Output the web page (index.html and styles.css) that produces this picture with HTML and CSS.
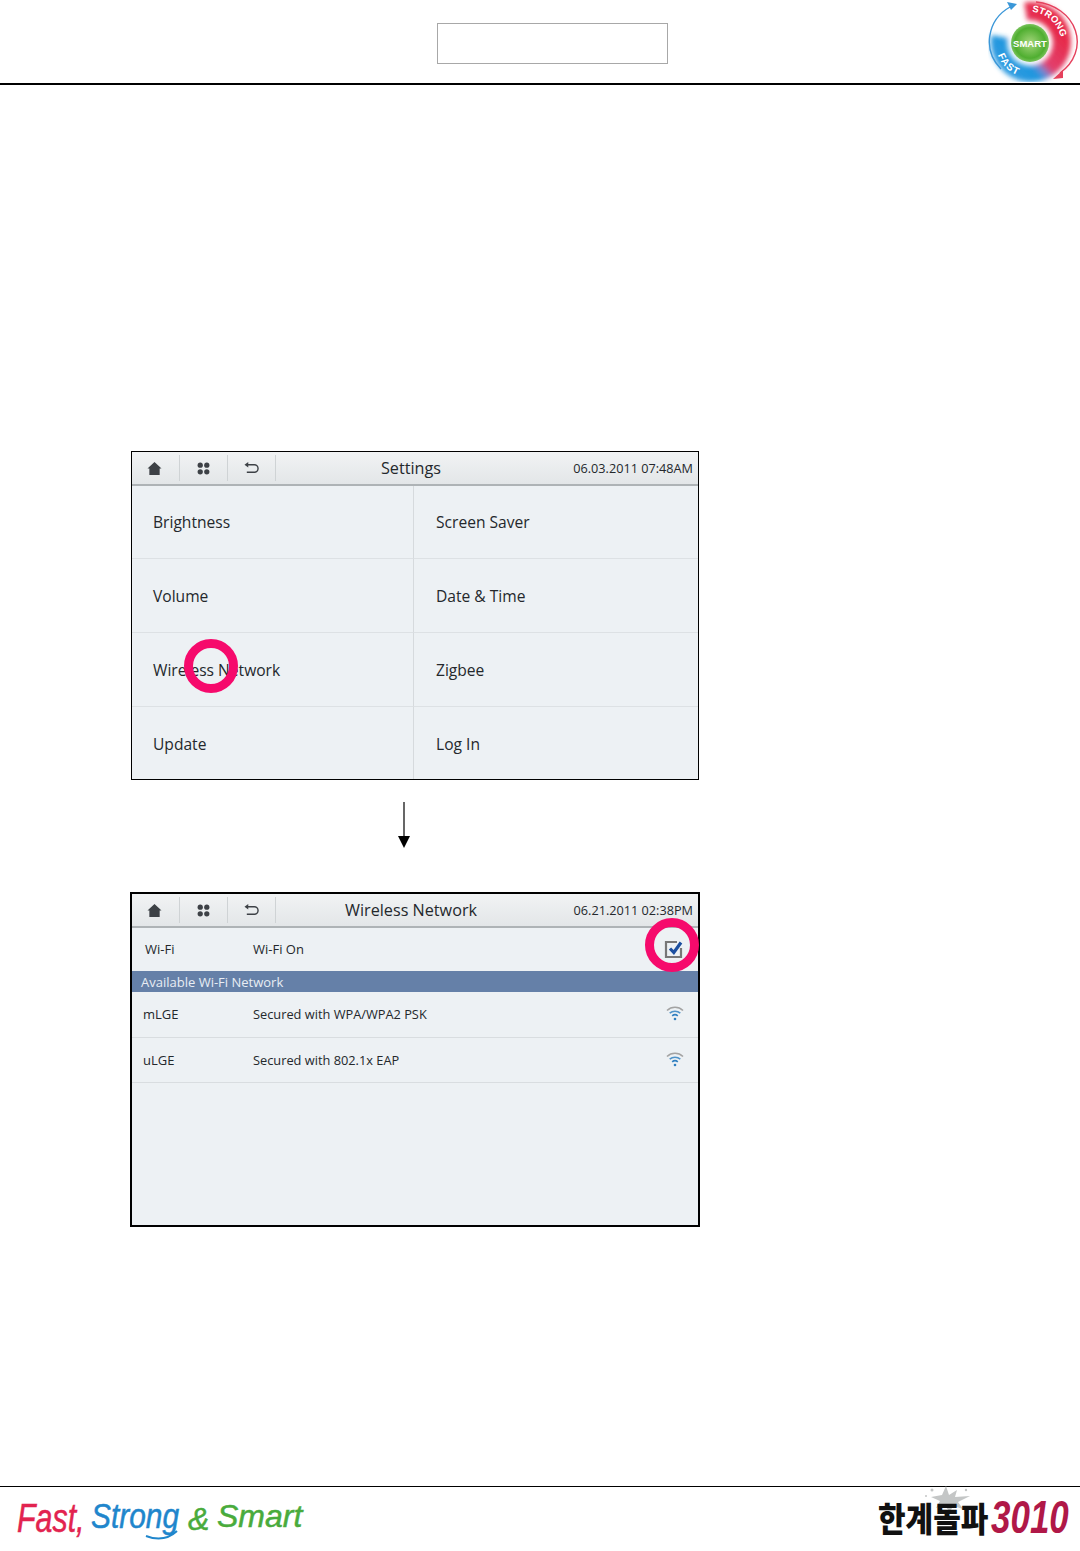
FILE: index.html
```html
<!DOCTYPE html>
<html lang="en">
<head>
    <meta charset="UTF-8">
    <meta name="viewport" content="width=device-width, initial-scale=1.0">
    <title>Wireless Network</title>
    <link rel="stylesheet" href="styles.css">
</head>
<body>
    <svg class="icon-defs" width="0" height="0">
        <defs>
            <symbol id="i-home" viewBox="0 0 16 16">
                <path d="M8 1 L15.5 8 L13.5 8 L13.5 15 L2.5 15 L2.5 8 L0.5 8 Z" fill="#3d4146"/>
            </symbol>
            <symbol id="i-apps" viewBox="0 0 16 16">
                <circle cx="4.5" cy="4.5" r="2.8" fill="#3d4146"/>
                <circle cx="11.5" cy="4.5" r="2.8" fill="#3d4146"/>
                <circle cx="4.5" cy="11.5" r="2.8" fill="#3d4146"/>
                <circle cx="11.5" cy="11.5" r="2.8" fill="#3d4146"/>
            </symbol>
            <symbol id="i-back" viewBox="0 0 16 16">
                <path d="M3 4 L11 4 A4 4 0 0 1 11 12 L3 12" fill="none" stroke="#3d4146" stroke-width="1.5"/>
                <path d="M0.5 4 L4.5 1 L4.5 7 Z" fill="#3d4146"/>
            </symbol>
            <symbol id="i-wifi" viewBox="0 0 18 16">
                <path d="M1 5.5 A11.5 11.5 0 0 1 17 5.5" fill="none" stroke="#a3a3a3" stroke-width="1.6"/>
                <path d="M3.7 8.2 A8 8 0 0 1 14.3 8.2" fill="none" stroke="#4f93c9" stroke-width="1.6"/>
                <path d="M6.2 10.8 A4.2 4.2 0 0 1 11.8 10.8" fill="none" stroke="#2f7fc0" stroke-width="1.6"/>
                <circle cx="9" cy="14" r="1.3" fill="#2f7fc0"/>
            </symbol>
        </defs>
    </svg>

    <header class="page-header">
        <div class="title-box"></div>
        <svg class="brand-ring" width="92" height="82" viewBox="0 0 92 82">
            <defs>
                <linearGradient id="ringFill" x1="0.8" y1="0.2" x2="0.1" y2="0.85">
                    <stop offset="0" stop-color="#e62c4c"/>
                    <stop offset="0.5" stop-color="#e2406e"/>
                    <stop offset="0.64" stop-color="#7a86d0"/>
                    <stop offset="0.76" stop-color="#1f96de"/>
                    <stop offset="1" stop-color="#2a9ae0"/>
                </linearGradient>
                <radialGradient id="coreFill">
                    <stop offset="0" stop-color="#a5d67c"/>
                    <stop offset="0.8" stop-color="#4fae30"/>
                    <stop offset="1" stop-color="#79c25c"/>
                </radialGradient>
                <filter id="soft" x="-50%" y="-50%" width="200%" height="200%"><feGaussianBlur stdDeviation="2.4"/></filter>
                <path id="arcStrong" d="M 44 12 A 31 31 0 0 1 73 43"/>
                <path id="arcFast" d="M 9 52 A 34 34 0 0 0 36 77"/>
            </defs>
            <path d="M 38 13.4 A 29 29 0 1 1 14.3 37" fill="none" stroke="url(#ringFill)" stroke-width="22" filter="url(#soft)"/>
            <path d="M 13 69 A 42 40 0 0 1 22 7" fill="none" stroke="#3b97d8" stroke-width="1.4"/>
            <path d="M 29 4 L 19 2 L 23 10 Z" fill="#3b97d8"/>
            <path d="M 48 2 A 46 40 0 0 1 72 73" fill="none" stroke="#e5405c" stroke-width="1.4"/>
            <path d="M 65 79 L 75 70 L 75 78 Z" fill="#e5405c"/>
            <circle cx="42" cy="43" r="23" fill="#fff" opacity="0.9" filter="url(#soft)"/>
            <circle cx="42" cy="43" r="19" fill="url(#coreFill)"/>
            <text class="ring-core" x="42" y="46.5" text-anchor="middle">SMART</text>
            <text class="ring-word"><textPath href="#arcStrong">STRONG</textPath></text>
            <text class="ring-word ring-fast"><textPath href="#arcFast" startOffset="3">FAST</textPath></text>
        </svg>
    </header>

    <main class="page-body">
        <section class="screen">
            <div class="top-bar">
                <div class="bar-btn"><svg class="bar-icon"><use href="#i-home"/></svg></div>
                <div class="bar-btn"><svg class="bar-icon"><use href="#i-apps"/></svg></div>
                <div class="bar-btn"><svg class="bar-icon"><use href="#i-back"/></svg></div>
                <div class="bar-title">Settings</div>
                <div class="bar-date">06.03.2011 07:48AM</div>
            </div>
            <div class="menu-grid">
                <div class="menu-item">Brightness</div>
                <div class="menu-item">Screen Saver</div>
                <div class="menu-item">Volume</div>
                <div class="menu-item">Date &amp; Time</div>
                <div class="menu-item">Wireless Network</div>
                <div class="menu-item">Zigbee</div>
                <div class="menu-item">Update</div>
                <div class="menu-item">Log In</div>
            </div>
            <div class="touch-ring ring-network"></div>
        </section>

        <svg class="flow-arrow" width="14" height="46" viewBox="0 0 14 46">
            <path d="M7 0 L7 36" stroke="#000" stroke-width="1.2"/>
            <path d="M1 34 L13 34 L7 46 Z" fill="#000"/>
        </svg>

        <section class="screen screen-heavy">
            <div class="top-bar">
                <div class="bar-btn"><svg class="bar-icon"><use href="#i-home"/></svg></div>
                <div class="bar-btn"><svg class="bar-icon"><use href="#i-apps"/></svg></div>
                <div class="bar-btn"><svg class="bar-icon"><use href="#i-back"/></svg></div>
                <div class="bar-title">Wireless Network</div>
                <div class="bar-date">06.21.2011 02:38PM</div>
            </div>
            <div class="wifi-toggle">
                <span class="col-name">Wi-Fi</span>
                <span>Wi-Fi On</span>
                <svg class="check-box" width="20" height="20" viewBox="0 0 20 20">
                    <path d="M13 3 L2 3 L2 18 L17 18 L17 9" fill="none" stroke="#777" stroke-width="2.2"/>
                    <path d="M6 9.5 L9.8 13.5 L17 3.5" fill="none" stroke="#1c4fa0" stroke-width="3.2"/>
                </svg>
            </div>
            <div class="list-band">Available Wi-Fi Network</div>
            <div class="net-row">
                <span class="col-name">mLGE</span>
                <span>Secured with WPA/WPA2 PSK</span>
                <svg class="wifi-icon"><use href="#i-wifi"/></svg>
            </div>
            <div class="net-row">
                <span class="col-name">uLGE</span>
                <span>Secured with 802.1x EAP</span>
                <svg class="wifi-icon"><use href="#i-wifi"/></svg>
            </div>
            <div class="touch-ring ring-check"></div>
        </section>
    </main>

    <footer class="page-footer">
        <svg class="slogan" width="320" height="64" viewBox="0 0 320 64">
            <text class="hand hand-red hand-big" transform="translate(17 45) scale(0.76 1)">Fast,</text>
            <text class="hand hand-blue" transform="translate(91 41) scale(0.83 1)">Strong</text>
            <path d="M146 49 Q164 56 177 44" fill="none" stroke="#1f86cc" stroke-width="2"/>
            <text class="hand hand-green hand-amp" x="188" y="43">&amp;</text>
            <text class="hand hand-green hand-low" x="217" y="40">Smart</text>
        </svg>
        <svg class="motto" width="220" height="64" viewBox="0 0 220 64">
            <g class="motto-splash">
                <path d="M82 8 L86 -1 L89 8 L97 3 L95 10 L110 9 L98 15 L103 22 L93 19 L90 25 L84 18 L76 21 L80 14 L71 10 Z"/>
                <circle cx="72" cy="3" r="1.5"/>
                <circle cx="106" cy="3" r="1.2"/>
                <circle cx="66" cy="9" r="1"/>
            </g>
            <text class="motto-ko" transform="translate(18 45) scale(1 1.15)">한계돌파</text>
            <text class="motto-num" transform="translate(131 46) scale(0.92 1.22)">3010</text>
        </svg>
    </footer>
</body>
</html>
```

FILE: styles.css
```css
html, body {
    margin: 0;
    padding: 0;
}
body {
    display: flex;
    flex-direction: column;
    min-height: 1551px;
    background: #fff;
    color: #24282c;
    font-family: "Open Sans", "Noto Sans", sans-serif;
    overflow: hidden;
}
.icon-defs {
    position: absolute;
}

/* page header */
.page-header {
    display: flex;
    align-items: flex-start;
    height: 83px;
    padding-left: 437px;
    border-bottom: 2px solid #000;
}
.title-box {
    box-sizing: border-box;
    width: 231px;
    height: 41px;
    margin-top: 23px;
    border: 1px solid #a8a8a8;
}
.brand-ring {
    margin-left: auto;
}
.ring-core {
    font: bold 9.5px "Liberation Sans", sans-serif;
    fill: #fff;
}
.ring-word {
    font: bold 9.5px "Liberation Sans", sans-serif;
    fill: #fff;
}
.ring-fast {
    font-size: 10px;
    letter-spacing: 1px;
}

/* screens */
.page-body {
    flex: 1;
    display: flex;
    flex-direction: column;
    align-items: center;
    width: 830px;
    padding-top: 366px;
}
.screen {
    position: relative;
    box-sizing: border-box;
    width: 568px;
    height: 329px;
    border: 1px solid #000;
    background: #edf1f4;
}
.screen-heavy {
    width: 570px;
    height: 335px;
    border-width: 2px;
}
.flow-arrow {
    margin: 22px 22px 44px 0;
}
.top-bar {
    display: flex;
    align-items: center;
    box-sizing: border-box;
    height: 34px;
    background: linear-gradient(#f1f3f4, #e3e6e8);
    border-bottom: 2px solid #aeb3b6;
}
.bar-btn {
    display: flex;
    align-items: center;
    justify-content: center;
    box-sizing: border-box;
    width: 48px;
    height: 26px;
    border-right: 1px solid #cfd3d5;
}
.bar-btn:first-child {
    padding-right: 2px;
}
.bar-icon {
    width: 15px;
    height: 15px;
}
.bar-title {
    flex: 1;
    padding-bottom: 1px;
    text-align: center;
    font-size: 16.2px;
}
.bar-date {
    width: 152px;
    box-sizing: border-box;
    padding-right: 5px;
    text-align: right;
    font-size: 12.7px;
}

/* settings menu */
.menu-grid {
    display: grid;
    grid-template-columns: 282px 284px;
    grid-template-rows: 73px 74px 74px 72px;
}
.menu-item {
    display: flex;
    align-items: center;
    padding-left: 21px;
    padding-top: 1px;
    font-size: 15.6px;
    border-bottom: 1px solid #dde1e4;
}
.menu-item:nth-child(odd) {
    border-right: 1px solid #d6dadd;
}
.menu-item:nth-child(even) {
    padding-left: 22px;
}
.menu-item:nth-child(-n+2) {
    padding-top: 0;
}
.menu-item:nth-last-child(-n+2) {
    border-bottom: none;
}

/* wireless list */
.wifi-toggle, .net-row {
    display: flex;
    align-items: center;
}
.wifi-toggle {
    box-sizing: border-box;
    height: 43px;
    padding-left: 13px;
    padding-bottom: 1px;
    font-size: 13px;
}
.wifi-toggle .col-name {
    width: 108px;
}
.check-box {
    margin-left: auto;
    margin-right: 14px;
    margin-top: -1px;
}
.list-band {
    height: 21px;
    line-height: 23px;
    padding-left: 9px;
    background: #6580a8;
    color: #e8edf4;
    font-size: 13px;
}
.net-row {
    box-sizing: border-box;
    height: 45.5px;
    padding-left: 11px;
    font-size: 12.8px;
    border-bottom: 1px solid #d9dde0;
}
.net-row .col-name {
    width: 110px;
    font-size: 13px;
}
.wifi-icon {
    width: 18px;
    height: 16px;
    margin-left: auto;
    margin-right: 14px;
    margin-top: -2px;
}

/* touch markers, drawn over the screens */
.touch-ring {
    position: absolute;
    box-sizing: border-box;
    width: 54px;
    height: 54px;
    border: 9px solid #f60a6c;
    border-radius: 50%;
}
.ring-network {
    left: 52px;
    top: 187px;
}
.ring-check {
    left: 513px;
    top: 24px;
}

/* page footer */
.page-footer {
    display: flex;
    justify-content: space-between;
    height: 64px;
    border-top: 1px solid #000;
}
.page-footer svg {
    overflow: visible;
}
.hand {
    font-family: "Liberation Sans", sans-serif;
    font-style: italic;
    font-size: 36px;
    stroke-width: 0.5px;
}
.hand-big {
    font-size: 40px;
}
.hand-low {
    font-size: 32px;
}
.hand-amp {
    font-size: 32px;
}
.hand-red {
    fill: #e2234f;
    stroke: #e2234f;
}
.hand-blue {
    fill: #1f86cc;
    stroke: #1f86cc;
}
.hand-green {
    fill: #49ab3c;
    stroke: #49ab3c;
}
.motto-splash {
    fill: #c4c6c6;
}
.motto-ko {
    font-family: "Noto Sans CJK KR", sans-serif;
    font-weight: 900;
    font-size: 30px;
    fill: #111;
}
.motto-num {
    font-family: "Liberation Sans", sans-serif;
    font-weight: bold;
    font-style: italic;
    font-size: 38px;
    fill: #b01848;
}
```
